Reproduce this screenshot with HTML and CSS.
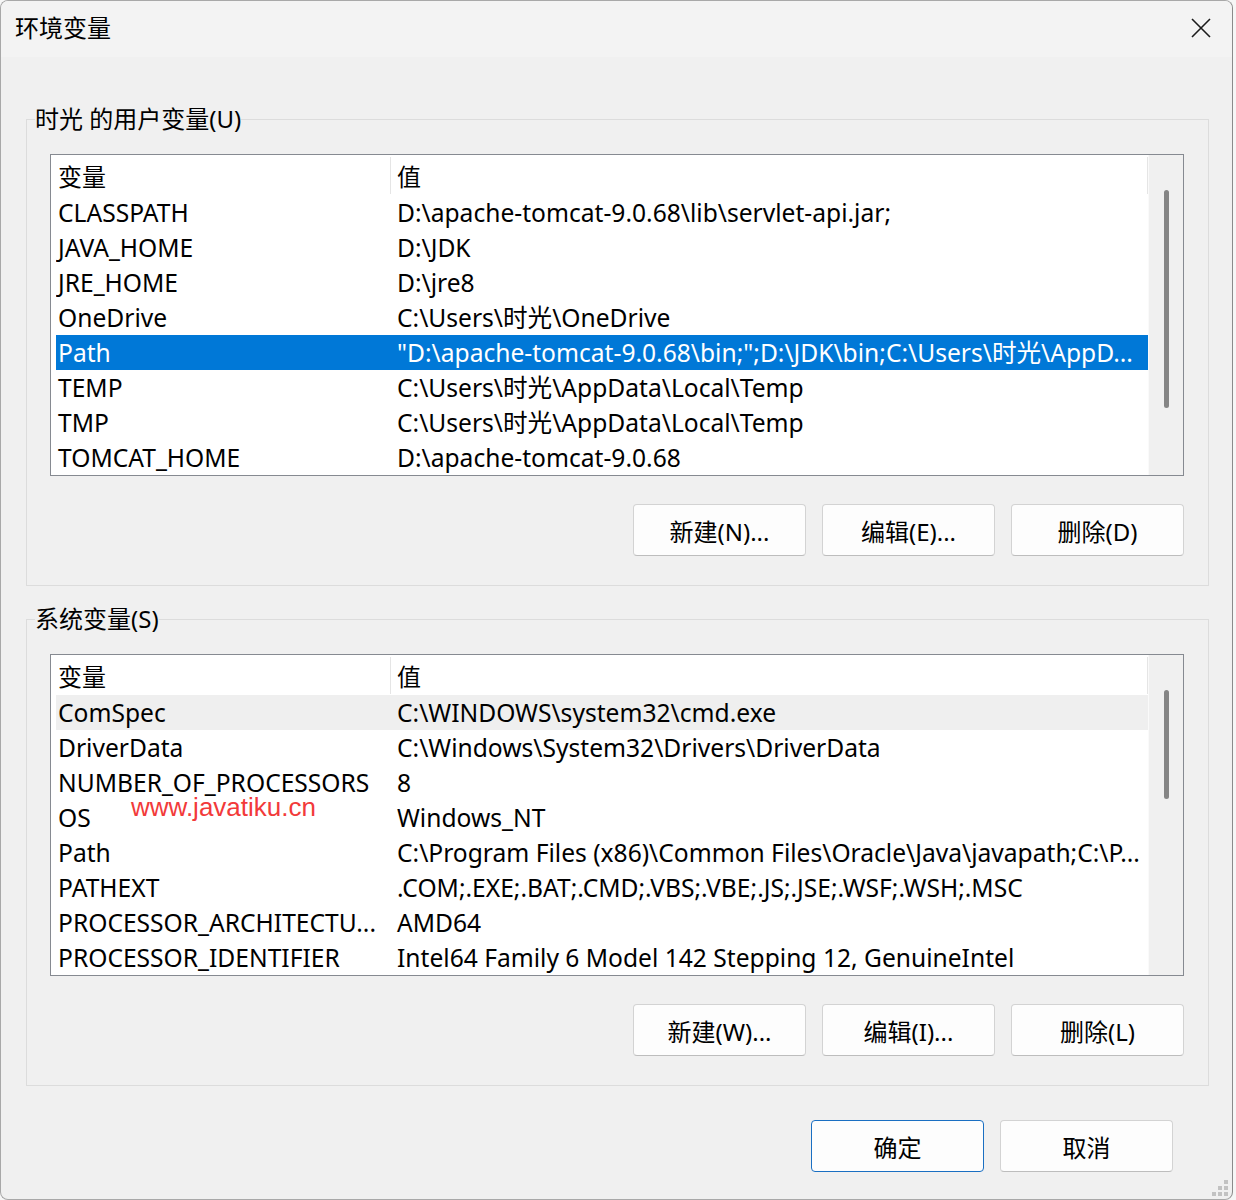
FILE: index.html
```html
<!DOCTYPE html>
<html lang="zh-CN">
<head>
    <meta charset="UTF-8">
    <title>环境变量</title>
    <link rel="stylesheet" href="styles.css">
</head>
<body>
    <div class="window">
        <div class="titlebar">
            <span class="title">环境变量</span>
            <svg class="close" width="20" height="20" viewBox="0 0 20 20"><path d="M1 1L19 19M19 1L1 19" stroke="#1b1b1b" stroke-width="1.6" fill="none"/></svg>
        </div>

        <div class="content">
            <fieldset class="group">
                <legend>时光 的用户变量(U)</legend>
                <div class="list">
                    <div class="list-main">
                        <div class="list-head">
                            <div class="head-cell name">变量</div>
                            <div class="head-cell value">值</div>
                        </div>
                        <div class="row"><span>CLASSPATH</span><span>D:\apache-tomcat-9.0.68\lib\servlet-api.jar;</span></div>
                        <div class="row"><span>JAVA_HOME</span><span>D:\JDK</span></div>
                        <div class="row"><span>JRE_HOME</span><span>D:\jre8</span></div>
                        <div class="row"><span>OneDrive</span><span>C:\Users\时光\OneDrive</span></div>
                        <div class="row selected"><span>Path</span><span>"D:\apache-tomcat-9.0.68\bin;";D:\JDK\bin;C:\Users\时光\AppD...</span></div>
                        <div class="row"><span>TEMP</span><span>C:\Users\时光\AppData\Local\Temp</span></div>
                        <div class="row"><span>TMP</span><span>C:\Users\时光\AppData\Local\Temp</span></div>
                        <div class="row"><span>TOMCAT_HOME</span><span>D:\apache-tomcat-9.0.68</span></div>
                    </div>
                    <div class="scrollbar"><div class="thumb long"></div></div>
                </div>
                <div class="buttons">
                    <button class="btn">新建(N)...</button>
                    <button class="btn">编辑(E)...</button>
                    <button class="btn">删除(D)</button>
                </div>
            </fieldset>

            <fieldset class="group second">
                <legend>系统变量(S)</legend>
                <div class="list">
                    <div class="list-main">
                        <div class="list-head">
                            <div class="head-cell name">变量</div>
                            <div class="head-cell value">值</div>
                        </div>
                        <div class="row hover"><span>ComSpec</span><span>C:\WINDOWS\system32\cmd.exe</span></div>
                        <div class="row"><span>DriverData</span><span>C:\Windows\System32\Drivers\DriverData</span></div>
                        <div class="row"><span>NUMBER_OF_PROCESSORS</span><span>8</span></div>
                        <div class="row"><span>OS</span><span>Windows_NT</span></div>
                        <div class="row"><span>Path</span><span>C:\Program Files (x86)\Common Files\Oracle\Java\javapath;C:\P...</span></div>
                        <div class="row"><span>PATHEXT</span><span>.COM;.EXE;.BAT;.CMD;.VBS;.VBE;.JS;.JSE;.WSF;.WSH;.MSC</span></div>
                        <div class="row"><span>PROCESSOR_ARCHITECTU...</span><span>AMD64</span></div>
                        <div class="row"><span>PROCESSOR_IDENTIFIER</span><span>Intel64 Family 6 Model 142 Stepping 12, GenuineIntel</span></div>
                    </div>
                    <div class="scrollbar"><div class="thumb short"></div></div>
                    <div class="watermark">www.javatiku.cn</div>
                </div>
                <div class="buttons">
                    <button class="btn">新建(W)...</button>
                    <button class="btn">编辑(I)...</button>
                    <button class="btn">删除(L)</button>
                </div>
            </fieldset>

            <div class="footer">
                <button class="btn default">确定</button>
                <button class="btn">取消</button>
            </div>
        </div>

        <svg class="grip" width="18" height="18" viewBox="0 0 18 18">
            <rect x="13" y="1" width="4" height="4" fill="#c2c2c2"/>
            <rect x="7" y="7" width="4" height="4" fill="#c2c2c2"/>
            <rect x="13" y="7" width="4" height="4" fill="#c2c2c2"/>
            <rect x="1" y="13" width="4" height="4" fill="#c2c2c2"/>
            <rect x="7" y="13" width="4" height="4" fill="#c2c2c2"/>
            <rect x="13" y="13" width="4" height="4" fill="#c2c2c2"/>
        </svg>
    </div>
</body>
</html>
```

FILE: styles.css
```css
body { margin: 0; background: #f6f6f6; font-family: "Noto Sans", "Noto Sans CJK SC", sans-serif; font-size: 24.6px; color: #000; }

.window { position: relative; width: 1233px; height: 1200px; box-sizing: border-box; border: 1px solid #a8a8a8; border-right-color: #8a8a8a; border-radius: 8px; background: #f0f0f0; overflow: hidden; }

.titlebar { height: 56px; background: #f3f3f3; display: flex; align-items: center; justify-content: space-between; padding: 0 21px 0 14px; }
.title { font-size: 24px; line-height: 30px; margin-top: -2px; }
.close { display: block; margin-top: -3px; }

.content { padding: 0 23px 0 25px; }

.group { margin: 47px 0 0 0; padding: 20px 24px 29px 23px; border: 1px solid #dcdcdc; min-width: 0; }
.group.second { margin-top: 18px; }
.group legend { padding: 0; margin-left: -15px; line-height: 30px; font-size: 24px; }

.list { position: relative; display: flex; height: 322px; box-sizing: border-box; border: 1px solid #868a91; background: #fff; }
.list-main { flex: 1; min-width: 0; }

.list-head { display: flex; height: 40px; font-size: 24px; }
.head-cell { height: 37px; margin-top: 2px; line-height: 40px; border-right: 1px solid #e5e5e5; white-space: nowrap; }
.head-cell.name { width: 332px; padding-left: 7px; }
.head-cell.value { flex: 1; padding-left: 6px; }

.row { display: grid; grid-template-columns: 339px 1fr; height: 35px; line-height: 35px; margin-left: 5px; white-space: nowrap; }
.row span { padding-left: 2px; overflow: hidden; }
.row.selected { background: #0078d7; color: #fff; }
.row.hover { background: #efefef; }

.scrollbar { width: 34px; background: #f0f0f0; border-left: 1px solid #fafafa; }
.thumb { width: 5px; margin: 35px auto 0; background: #858585; border-radius: 3px; }
.thumb.long { height: 218px; }
.thumb.short { height: 109px; }

.watermark { position: absolute; left: 80px; top: 137px; font-family: "Liberation Sans", Arial, sans-serif; font-size: 26px; line-height: 30px; color: #f23a3a; }

.buttons { display: flex; justify-content: flex-end; gap: 16px; margin-top: 28px; }
.btn { width: 173px; height: 52px; font: inherit; font-size: 24px; color: #000; background: #fdfdfd; border: 1px solid #d3d3d3; border-bottom-color: #bdbdbd; border-radius: 4px; padding: 0; }
.btn.default { border-color: #1a6fc2; }

.footer { display: flex; justify-content: flex-end; gap: 16px; margin: 34px 36px 0 0; }

.grip { position: absolute; right: 3px; bottom: 2px; }
```
